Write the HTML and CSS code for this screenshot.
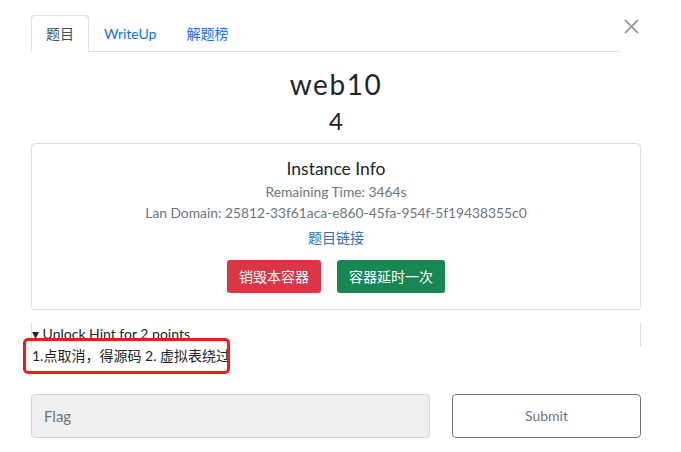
FILE: index.html
```html
<!DOCTYPE html>
<html>
<head>
<meta charset="utf-8">
<link rel="stylesheet" href="styles.css">
</head>
<body>
<div class="modal">
  <div class="header">
    <ul class="tabs">
      <li class="tab active">题目</li>
      <li class="tab">WriteUp</li>
      <li class="tab">解题榜</li>
    </ul>
    <button class="close" aria-label="Close">
      <svg width="15" height="15" viewBox="0 0 15 15"><path d="M1 1L14 14M14 1L1 14" stroke="#8a8a8a" stroke-width="1.6"/></svg>
    </button>
  </div>
  <h2 class="title">web10</h2>
  <h3 class="value">4</h3>
  <div class="card">
    <h5 class="card-title">Instance Info</h5>
    <p class="muted">Remaining Time: 3464s</p>
    <p class="muted">Lan Domain: 25812-33f61aca-e860-45fa-954f-5f19438355c0</p>
    <a class="link">题目链接</a>
    <div class="actions">
      <span class="btn btn-red">销毁本容器</span>
      <span class="btn btn-green">容器延时一次</span>
    </div>
  </div>
  <div class="hint-wrap">
    <div class="hint-summary">▾ Unlock Hint for 2 points</div>
    <div class="hint-body">1.点取消，得源码 2. 虚拟表绕过</div>
    <div class="annot"></div>
  </div>
  <div class="form-row">
    <div class="input">Flag</div>
    <div class="submit">Submit</div>
  </div>
</div>
</body>
</html>
```
FILE: styles.css
```css
* { box-sizing: border-box; }
body {
  margin: 0;
  background: #fff;
  font-family: Lato, "Noto Sans CJK SC", sans-serif;
  color: #212529;
}
.modal {
  width: 610px;
  margin-left: 31px;
  padding-top: 15px;
}
.header {
  display: flex;
  align-items: flex-start;
}
.tabs {
  list-style: none;
  margin: 0;
  padding: 0;
  display: flex;
  width: 589px;
  border-bottom: 1px solid #dee2e6;
}
.tab {
  font-size: 14px;
  line-height: 20px;
  padding: 8px 14px 7px;
  color: #0d6efd;
  border: 1px solid transparent;
  border-bottom: none;
  border-radius: 4px 4px 0 0;
  margin-bottom: -1px;
}
.tab.active {
  color: #495057;
  border-color: #dee2e6;
  background: #fff;
  padding-bottom: 8px;
}
.close {
  border: none;
  background: none;
  padding: 0;
  margin: 4px 0 0 4px;
  width: 15px;
  height: 15px;
  display: block;
}
.close svg { display: block; }
.title {
  margin: 15px 0 0;
  text-align: center;
  font-weight: 400;
  font-size: 28px;
  line-height: 34px;
  letter-spacing: 1.6px;
}
.value {
  margin: 6px 0 0;
  text-align: center;
  font-weight: 400;
  font-size: 24px;
  line-height: 28px;
}
.card {
  margin-top: 8px;
  border: 1px solid #dfdfdf;
  border-radius: 4px;
  text-align: center;
  padding: 13px 0 16px;
}
.card-title {
  margin: 0;
  font-weight: 400;
  font-size: 17.5px;
  line-height: 24px;
}
.muted {
  margin: 0;
  color: #6c757d;
  font-size: 13.8px;
  line-height: 21px;
}
.link {
  display: block;
  margin-top: 4px;
  color: #2b72c2;
  font-size: 14px;
  line-height: 21px;
}
.actions {
  display: flex;
  justify-content: center;
  gap: 16px;
  margin-top: 12px;
}
.btn {
  display: inline-block;
  color: #fff;
  font-size: 14px;
  line-height: 21px;
  padding: 6px 12px;
  border-radius: 3px;
}
.btn-red { background: #dc3545; }
.btn-green { background: #198754; }
.hint-wrap {
  position: relative;
  margin-top: 13px;
}
.hint-summary {
  border-left: 1px solid #ddd;
  border-right: 1px solid #ddd;
  height: 23px;
  font-size: 14px;
  line-height: 21px;
  overflow: hidden;
}
.hint-body {
  font-size: 14px;
  line-height: 21px;
  padding-left: 1px;
  margin-top: -1px;
}
.annot {
  position: absolute;
  left: -8px;
  top: 15px;
  width: 207px;
  height: 36px;
  border: 3px solid #f21b1b;
  border-radius: 5px;
}
.form-row {
  display: flex;
  gap: 22px;
  margin-top: 28px;
}
.input {
  width: 399px;
  height: 44px;
  background: #efefef;
  border: 1px solid #ced4da;
  border-radius: 4px;
  color: #6c757d;
  font-size: 15px;
  line-height: 42px;
  padding-left: 12px;
}
.submit {
  width: 189px;
  height: 44px;
  border: 1px solid #6c757d;
  border-radius: 4px;
  color: #6c757d;
  font-size: 14px;
  line-height: 42px;
  text-align: center;
}
```
